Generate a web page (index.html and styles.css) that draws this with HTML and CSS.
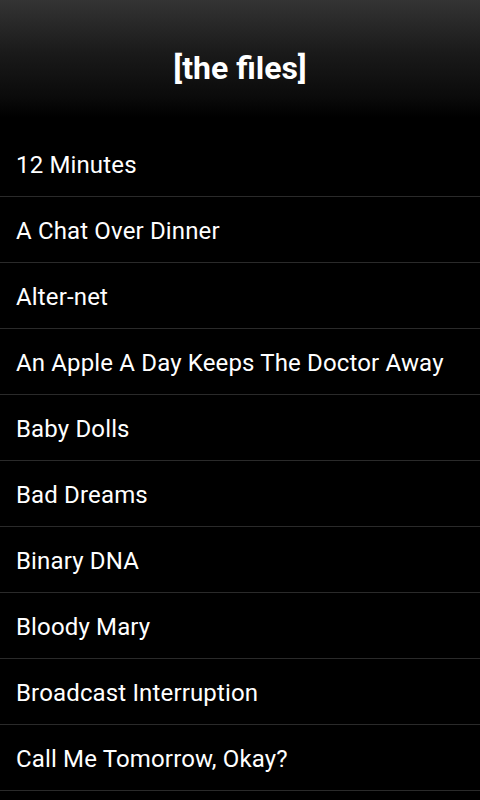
FILE: index.html
```html
<!DOCTYPE html>
<html>
<head>
<meta charset="utf-8">
<link rel="stylesheet" href="styles.css">
</head>
<body>
<header class="header"><h1 class="title">[the files]</h1></header>
<ul class="list">
<li class="item">12 Minutes</li>
<li class="item">A Chat Over Dinner</li>
<li class="item">Alter-net</li>
<li class="item">An Apple A Day Keeps The Doctor Away</li>
<li class="item">Baby Dolls</li>
<li class="item">Bad Dreams</li>
<li class="item">Binary DNA</li>
<li class="item">Bloody Mary</li>
<li class="item">Broadcast Interruption</li>
<li class="item">Call Me Tomorrow, Okay?</li>
</ul>
</body>
</html>
```
FILE: styles.css
```css
html, body {
  margin: 0;
  padding: 0;
  background: #000;
  width: 480px;
  height: 800px;
  overflow: hidden;
  font-family: Roboto, "Noto Sans", sans-serif;
}
.header {
  height: 131px;
  display: flex;
  align-items: center;
  justify-content: center;
  background: linear-gradient(to bottom, #343434 0%, #1a1a1a 40%, #0a0a0a 75%, #000 90%);
}
.title {
  margin: 0;
  color: #fff;
  font-size: 32px;
  font-weight: bold;
  line-height: 1;
  padding-top: 4px;
}
.list {
  list-style: none;
  margin: 0;
  padding: 0;
}
.item {
  height: 65px;
  display: flex;
  align-items: center;
  padding-left: 16px;
  padding-top: 2px;
  color: #fff;
  font-size: 24px;
  letter-spacing: 0.15px;
  border-bottom: 1px solid #2a2a2a;
  box-sizing: border-box;
  height: 66px;
}
```
